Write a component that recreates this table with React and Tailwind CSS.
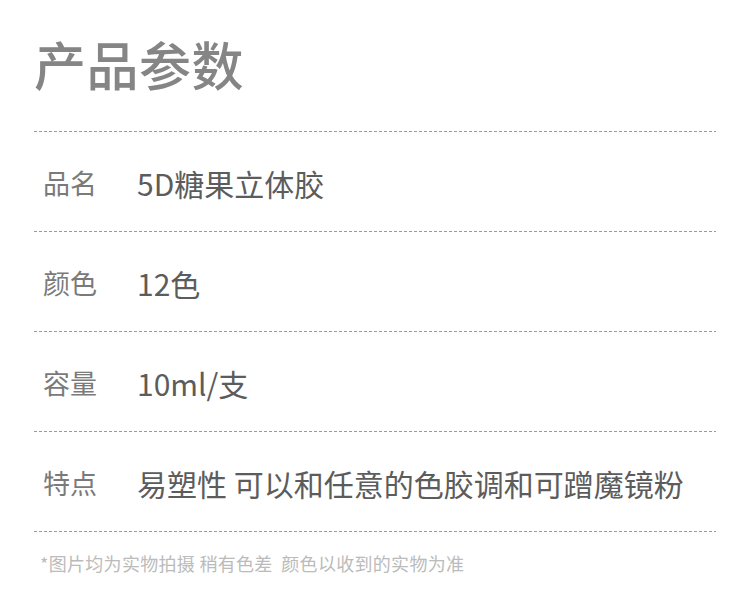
const rows = [
  { label: '品名', value: '5D糖果立体胶' },
  { label: '颜色', value: '12色' },
  { label: '容量', value: '10ml/支' },
  { label: '特点', value: '易塑性 可以和任意的色胶调和可蹭魔镜粉' },
];

const Dashed = () => (
  <div className="h-px w-full bg-[repeating-linear-gradient(to_right,#9a9a9a_0,#9a9a9a_3px,transparent_3px,transparent_5px)]" />
);

export default function App() {
  return (
    <div className="w-[750px] h-[598px] bg-white font-['Noto_Sans_CJK_SC','Noto_Sans',sans-serif]">
      <div className="pl-[34px] w-[716px]">
        <div className="h-[131px] flex items-center">
          <h1 className="text-[52px] leading-none text-[#858585] font-medium -mt-[4px] tracking-[0.5px]">产品参数</h1>
        </div>
        <Dashed />
        {rows.map((r) => (
          <div key={r.label}>
            <div className="h-[99px] flex items-center pt-[2px]">
              <div className="w-[103px] pl-[9px] text-[27px] text-[#7a7a7a] leading-none">{r.label}</div>
              <div className="text-[30px] text-[#5c5c5c] leading-none">{r.value}</div>
            </div>
            <Dashed />
          </div>
        ))}
        <div className="pt-[22px] pl-[6px] text-[18px] tracking-[0.3px] text-[#bbbbbb] leading-none whitespace-pre">
          {'*图片均为实物拍摄 稍有色差  颜色以收到的实物为准'}
        </div>
      </div>
    </div>
  );
}
